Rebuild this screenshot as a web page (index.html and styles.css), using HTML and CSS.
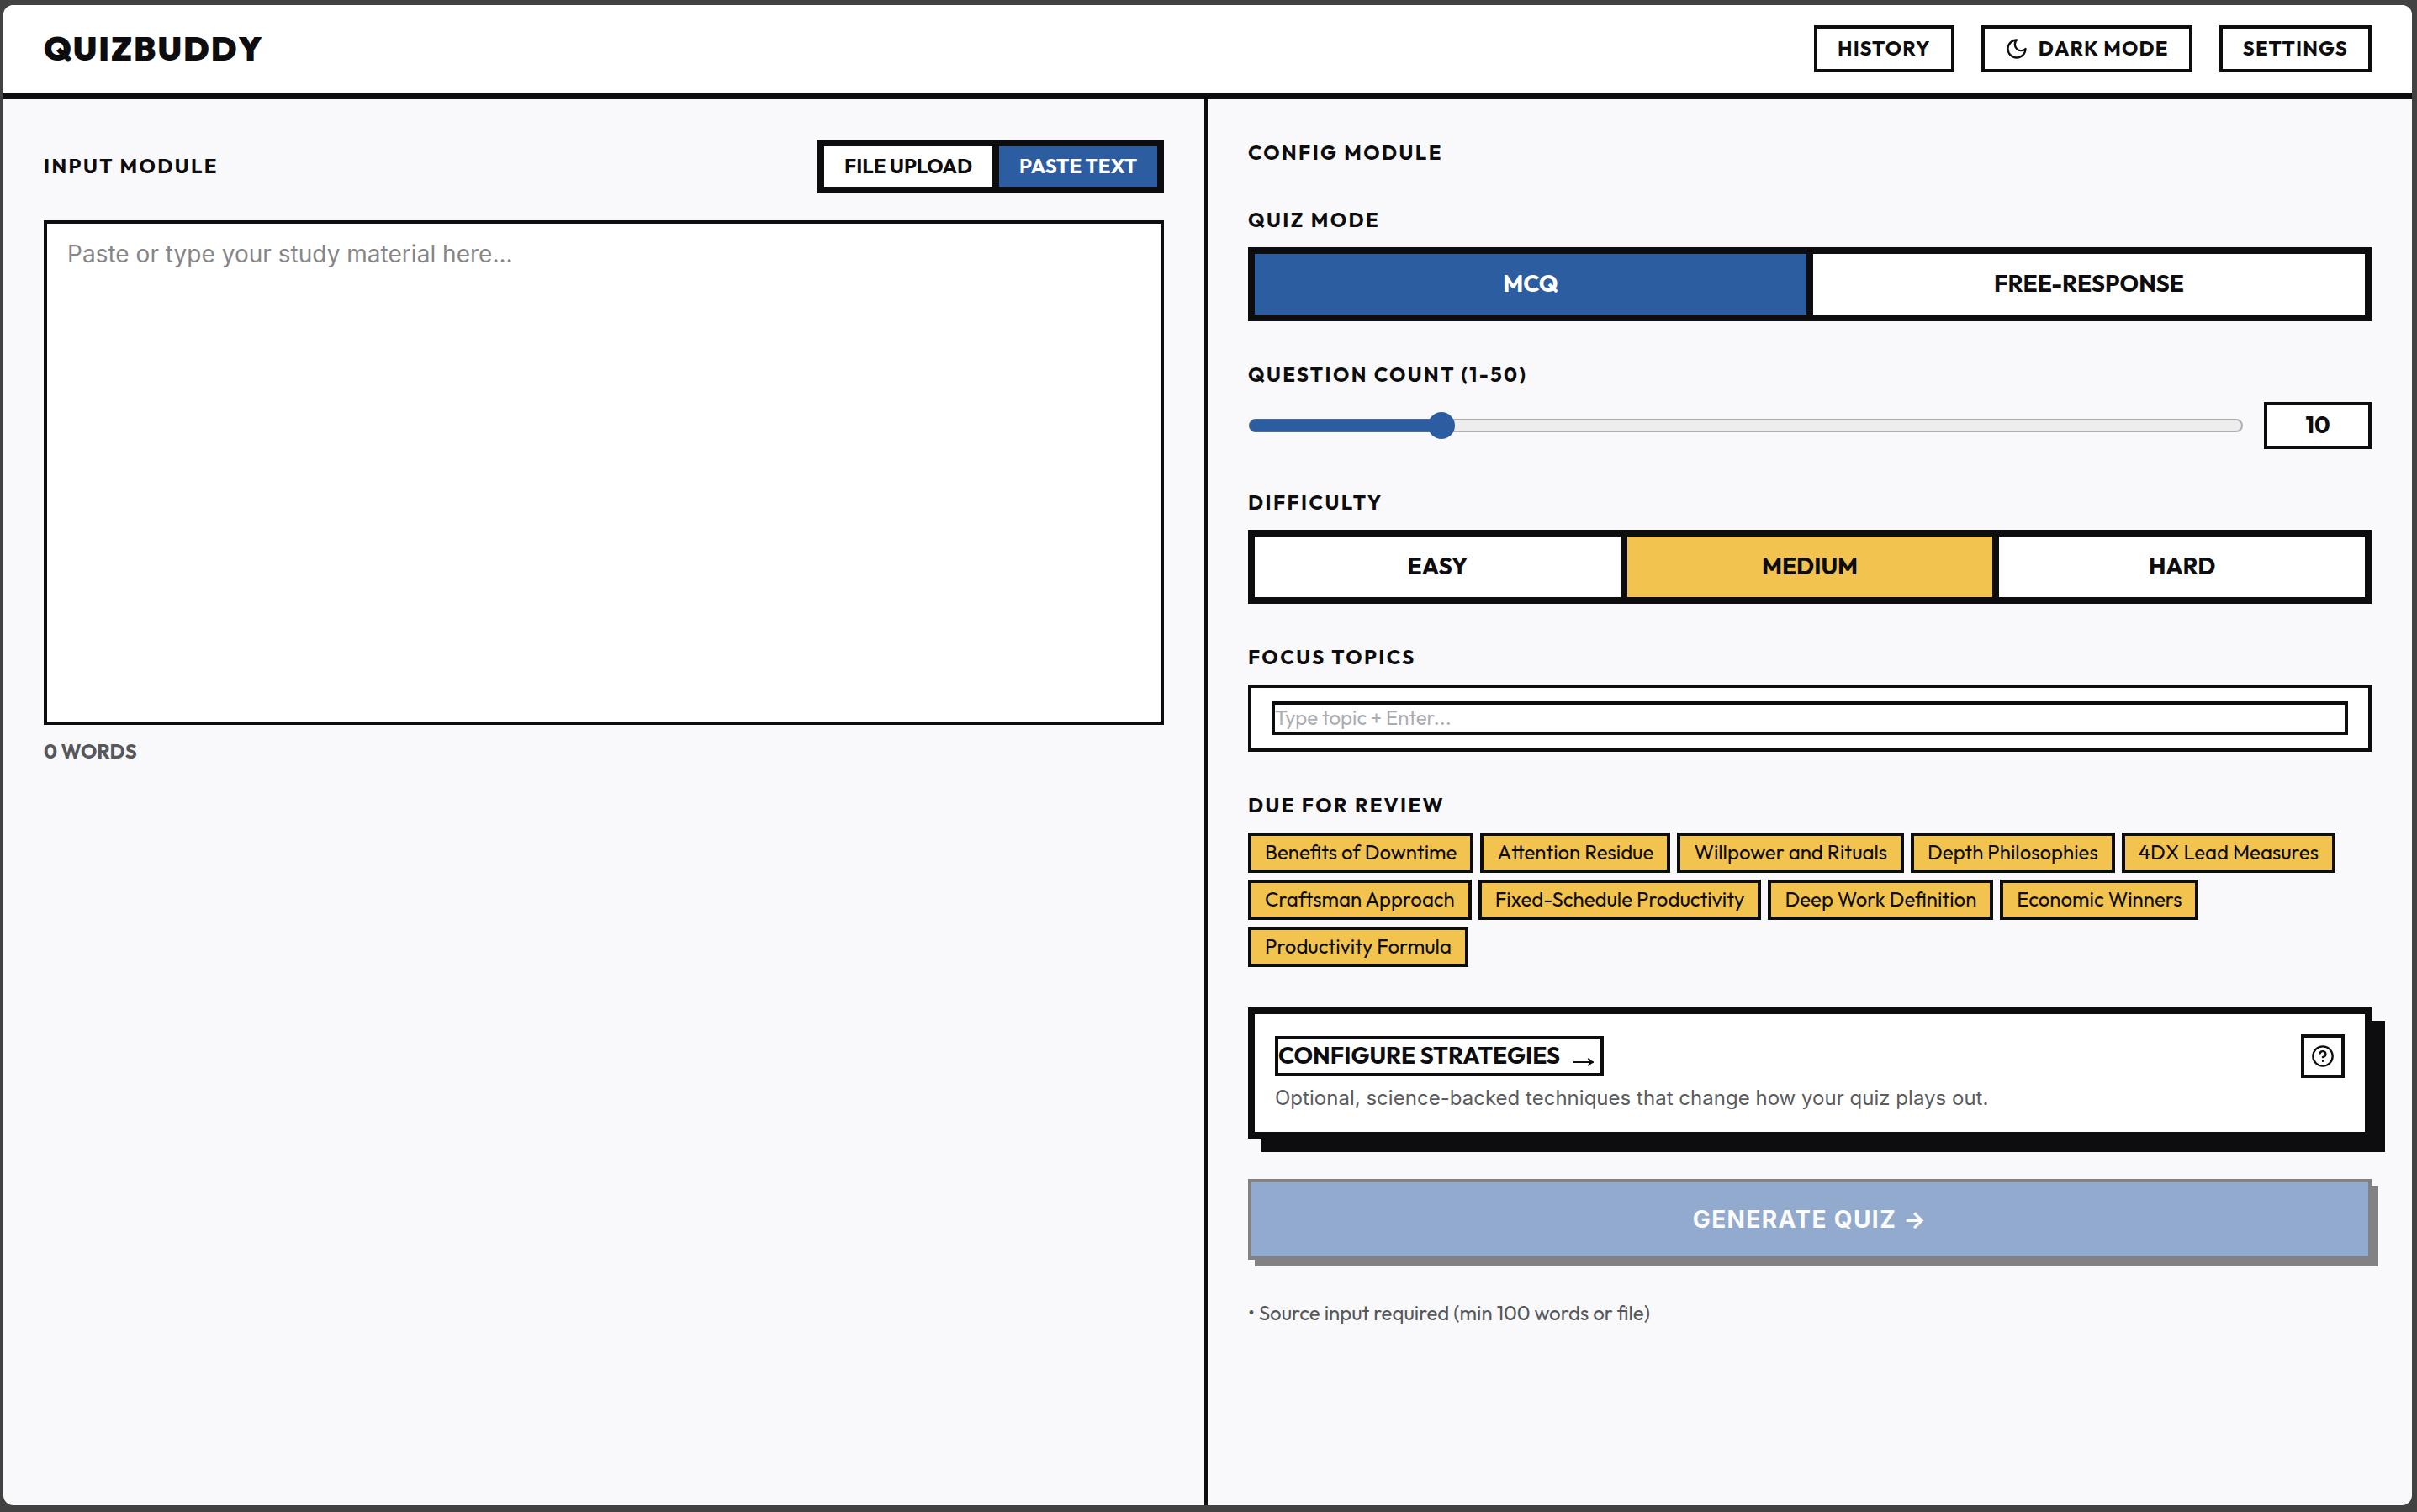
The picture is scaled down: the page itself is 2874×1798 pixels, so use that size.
FILE: index.html
```html
<!DOCTYPE html>
<html lang="en">
<head>
    <meta charset="UTF-8">
    <meta name="viewport" content="width=device-width, initial-scale=1.0">
    <title>QuizBuddy</title>
    <link rel="stylesheet" href="styles.css">
</head>
<body>
    <div class="window">
        <header class="topbar">
            <h1 class="logo">QUIZBUDDY</h1>
            <nav class="nav">
                <button class="nav-btn">HISTORY</button>
                <button class="nav-btn">
                    <svg class="icon" viewBox="0 0 24 24"><path d="M12 3a6 6 0 0 0 9 9 9 9 0 1 1-9-9Z"/></svg>
                    <span>DARK MODE</span>
                </button>
                <button class="nav-btn">SETTINGS</button>
            </nav>
        </header>
        <main class="columns">
            <section class="panel panel-input">
                <div class="panel-head">
                    <h2 class="label">INPUT MODULE</h2>
                    <div class="tabs">
                        <button class="tab">FILE UPLOAD</button>
                        <button class="tab active">PASTE TEXT</button>
                    </div>
                </div>
                <div class="textarea">Paste or type your study material here...</div>
                <p class="word-count">0 WORDS</p>
            </section>
            <section class="panel panel-config">
                <h2 class="label config-title">CONFIG MODULE</h2>

                <div class="field">
                    <h3 class="label">QUIZ MODE</h3>
                    <div class="segmented">
                        <button class="segment selected-blue">MCQ</button>
                        <button class="segment">FREE-RESPONSE</button>
                    </div>
                </div>

                <div class="field">
                    <h3 class="label">QUESTION COUNT (1-50)</h3>
                    <div class="count-row">
                        <div class="slider">
                            <div class="slider-fill"></div>
                            <div class="slider-thumb"></div>
                        </div>
                        <div class="count-box">10</div>
                    </div>
                </div>

                <div class="field">
                    <h3 class="label">DIFFICULTY</h3>
                    <div class="segmented">
                        <button class="segment">EASY</button>
                        <button class="segment selected-yellow">MEDIUM</button>
                        <button class="segment">HARD</button>
                    </div>
                </div>

                <div class="field">
                    <h3 class="label">FOCUS TOPICS</h3>
                    <div class="topics">
                        <div class="topics-input">Type topic + Enter...</div>
                    </div>
                </div>

                <div class="field">
                    <h3 class="label">DUE FOR REVIEW</h3>
                    <div class="chips">
                        <span class="chip">Benefits of Downtime</span>
                        <span class="chip">Attention Residue</span>
                        <span class="chip">Willpower and Rituals</span>
                        <span class="chip">Depth Philosophies</span>
                        <span class="chip">4DX Lead Measures</span>
                        <span class="chip">Craftsman Approach</span>
                        <span class="chip">Fixed-Schedule Productivity</span>
                        <span class="chip">Deep Work Definition</span>
                        <span class="chip">Economic Winners</span>
                        <span class="chip">Productivity Formula</span>
                    </div>
                </div>

                <div class="strategy-card">
                    <div class="strategy-head">
                        <a class="strategy-link">
                            <span class="strategy-name">CONFIGURE STRATEGIES</span>
                            <svg class="link-arrow" viewBox="0 0 24 12"><path d="M0 6h22M17.500 1.500Q19.500 5 23 6Q19.500 7 17.500 10.500"/></svg>
                        </a>
                        <button class="help-btn">
                            <svg class="icon" viewBox="0 0 24 24"><circle cx="12" cy="12" r="10"/><path d="M9.090 9a3 3 0 0 1 5.830 1c0 2-3 3-3 3"/><path d="M12 17h.01"/></svg>
                        </button>
                    </div>
                    <p class="strategy-text">Optional, science-backed techniques that change how your quiz plays out.</p>
                </div>

                <button class="generate">GENERATE QUIZ →</button>
                <p class="hint">• Source input required (min 100 words or file)</p>
            </section>
        </main>
    </div>
</body>
</html>
```
FILE: styles.css
```css
* {
    box-sizing: border-box;
    margin: 0;
    padding: 0;
}
body {
    width: 2874px;
    height: 1798px;
    padding: 6px 6px 8px 4px;
    overflow: hidden;
    background: #424242;
    color: #0d0d0f;
    font-family: 'Outfit', 'Lato', sans-serif;
    font-size: 24px;
    line-height: 30px;
}
button {
    font: inherit;
    color: inherit;
    background: #fff;
    border: none;
    white-space: nowrap;
}
.window {
    display: flex;
    flex-direction: column;
    height: 1784px;
    border-radius: 12px;
    overflow: hidden;
    background: #f9f9fb;
}
.icon {
    width: 28px;
    height: 28px;
    fill: none;
    stroke: currentColor;
    stroke-width: 2;
    stroke-linecap: round;
    stroke-linejoin: round;
}

/* header */
.topbar {
    display: flex;
    align-items: center;
    justify-content: space-between;
    height: 112px;
    padding: 0 48px;
    background: #fff;
    border-bottom: 8px solid #0d0d0f;
}
.logo {
    margin-bottom: 2px;
    font-size: 40px;
    font-weight: 900;
    line-height: 48px;
    letter-spacing: 2px;
}
.nav {
    display: flex;
    gap: 32px;
}
.nav-btn {
    display: flex;
    align-items: center;
    gap: 12px;
    height: 56px;
    padding: 0 24px 2px;
    border: 4px solid #0d0d0f;
    font-weight: 700;
    letter-spacing: 1.200px;
}
.nav-btn .icon {
    margin-top: 2px;
}

/* panels */
.columns {
    display: grid;
    grid-template-columns: 1fr 1fr;
    flex: 1;
}
.panel {
    padding: 48px;
}
.panel-input {
    border-right: 4px solid #0d0d0f;
}
.label {
    font-size: 24px;
    font-weight: 700;
    line-height: 30px;
    letter-spacing: 2.400px;
}
.panel-head {
    display: flex;
    align-items: center;
    justify-content: space-between;
}
.panel-head .label {
    margin-bottom: 2px;
}
.tabs {
    display: flex;
    gap: 8px;
    height: 64px;
    background: #0d0d0f;
    border: 8px solid #0d0d0f;
}
.tab {
    padding: 0 24px 2px;
    font-weight: 700;
}
.tab.active,
.segment.selected-blue {
    background: #2d5da1;
    color: #fff;
}
.textarea {
    height: 600px;
    margin-top: 32px;
    padding: 19px 24px;
    background: #fff;
    border: 4px solid #0d0d0f;
    color: #868688;
    font-family: 'Inter', sans-serif;
    font-size: 28px;
    line-height: 34px;
    letter-spacing: .02px;
}
.word-count {
    margin-top: 16px;
    color: #56585b;
    font-weight: 700;
}

/* config */
.config-title {
    margin-bottom: 50px;
}
.field {
    margin-bottom: 48px;
}
.field .label {
    margin-bottom: 18px;
}
.segmented {
    display: flex;
    gap: 8px;
    height: 88px;
    background: #0d0d0f;
    border: 8px solid #0d0d0f;
}
.segment {
    flex: 1 1 0;
    padding-bottom: 2px;
    font-size: 28px;
    font-weight: 700;
}
.segment.selected-yellow {
    background: #f2c34f;
}
.count-row {
    display: flex;
    align-items: center;
    gap: 24px;
}
.slider {
    position: relative;
    flex: 1;
    height: 16px;
    margin: 0 1px;
    background: #ededee;
    border: 2px solid #aeaeb0;
    border-radius: 8px;
}
.slider-fill {
    width: 230px;
    height: 16px;
    margin: -2px;
    background: #2d5da1;
    border: 1px solid #5f6c80;
    border-radius: 8px;
}
.slider-thumb {
    position: absolute;
    left: 211px;
    top: -10px;
    width: 32px;
    height: 32px;
    border-radius: 50%;
    background: #2d5da1;
}
.count-box {
    width: 128px;
    height: 56px;
    background: #fff;
    border: 4px solid #0d0d0f;
    font-size: 28px;
    font-weight: 700;
    line-height: 46px;
    text-align: center;
}
.topics {
    height: 80px;
    padding: 16px 24px;
    background: #fff;
    border: 4px solid #0d0d0f;
}
.topics-input {
    height: 40px;
    border: 4px solid #0d0d0f;
    color: #abaeb3;
    line-height: 31px;
}
.chips {
    display: flex;
    flex-wrap: wrap;
    gap: 8px;
}
.chip {
    height: 48px;
    padding: 0 16px;
    background: #f2c34f;
    border: 4px solid #0d0d0f;
    line-height: 39px;
    white-space: nowrap;
}
.strategy-card {
    height: 156px;
    margin-bottom: 48px;
    padding: 24px;
    background: #fff;
    border: 8px solid #0d0d0f;
    box-shadow: 16px 16px 0 #0d0d0f;
}
.strategy-head {
    display: flex;
    align-items: center;
    justify-content: space-between;
}
.strategy-link {
    display: flex;
    align-items: center;
    justify-content: space-between;
    width: 391px;
    height: 48px;
    padding-right: 8px;
    border: 4px solid #0d0d0f;
    font-size: 28px;
    font-weight: 700;
    line-height: 38px;
    white-space: nowrap;
}
.strategy-name {
    margin-bottom: 2px;
}
.link-arrow {
    width: 24px;
    height: 12px;
    margin-top: 14px;
    fill: none;
    stroke: currentColor;
    stroke-width: 2;
}
.help-btn {
    display: flex;
    align-items: center;
    justify-content: center;
    width: 52px;
    height: 52px;
    border: 4px solid #0d0d0f;
}
.strategy-text {
    margin-top: 9px;
    color: #5a5c60;
    font-family: 'Inter', sans-serif;
    letter-spacing: .02px;
}
.generate {
    display: block;
    width: 100%;
    height: 96px;
    margin-bottom: 48px;
    background: #2d5da1;
    border: 4px solid #0d0d0f;
    box-shadow: 8px 8px 0 #0d0d0f;
    color: #fff;
    font-family: 'Inter', sans-serif;
    font-size: 28px;
    font-weight: 700;
    letter-spacing: 1.400px;
    opacity: .5;
}
.hint {
    color: #56585b;
}
```
